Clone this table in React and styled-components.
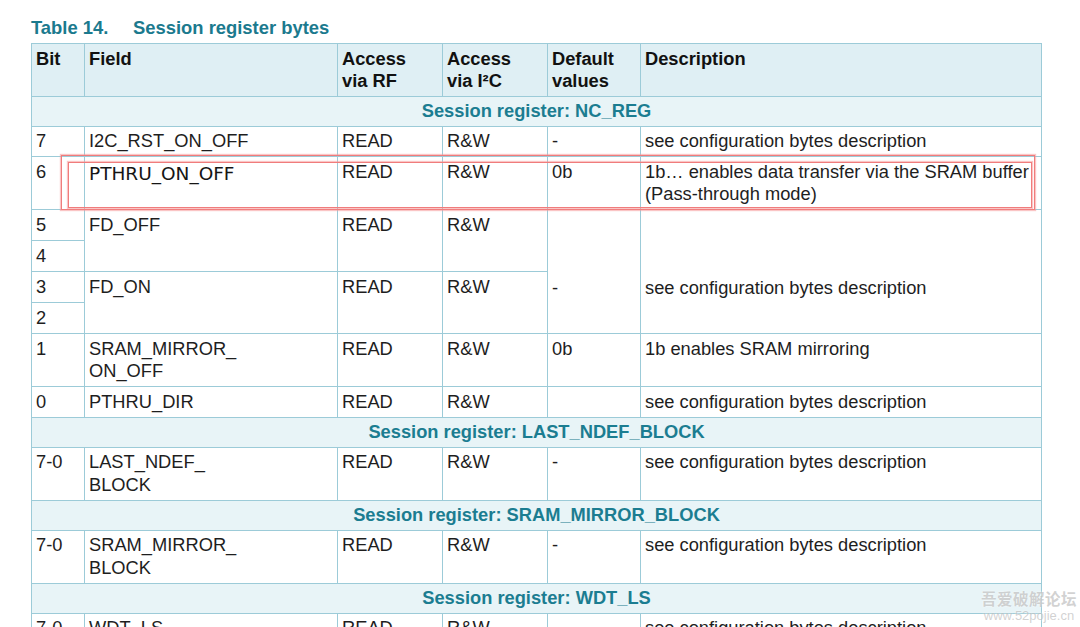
import React from 'react';
import styled, { createGlobalStyle } from 'styled-components';

const GlobalStyle = createGlobalStyle`
  html, body {
    margin: 0;
    padding: 0;
    background: #ffffff;
    overflow: hidden;
  }
  body {
    width: 1080px;
    height: 627px;
    font-family: "Liberation Sans", Arial, sans-serif;
  }
`;

const Page = styled.div`
  position: relative;
  width: 1080px;
  height: 627px;
  overflow: hidden;
  padding: 16px 0 0 31px;
  box-sizing: border-box;
`;

const Caption = styled.div`
  display: flex;
  color: #1b7a8e;
  font-weight: bold;
  font-size: 18.4px;
  line-height: 23px;
  margin-bottom: 4px;

  span:first-child {
    width: 102px;
  }
`;

const Table = styled.table`
  border-collapse: collapse;
  table-layout: fixed;
  width: 1010px;
  font-size: 18.3px;
  line-height: 22.5px;
  color: #1e1e1e;
`;

const Th = styled.th`
  background: #dfeff4;
  border: 1px solid #9ccbd8;
  text-align: left;
  vertical-align: top;
  padding: 3.5px 4px 3px 4px;
  font-weight: bold;
  color: #111;
`;

const Td = styled.td`
  border: 1px solid #9ccbd8;
  border-top-color: ${p => (p.$soft ? '#cfe4ea' : '#9ccbd8')};
  vertical-align: ${p => (p.$middle ? 'middle' : 'top')};
  padding: ${p =>
    p.$middle ? '36px 4px 3.5px 4px' : p.$split ? '3.5px 4px 4px 4px' : '3.5px 4px 3.5px 4px'};
  white-space: nowrap;
`;

const SectionCell = styled.td`
  background: #e8f4f7;
  border: 1px solid #9ccbd8;
  text-align: center;
  color: #1b7d91;
  font-weight: bold;
  padding: 3px 4px 3.5px 4px;
`;

const PastedName = styled.span`
  font-family: "DejaVu Sans", sans-serif;
  font-size: 18.5px;
  color: #151515;
  display: inline-block;
  padding-top: 2px;
`;

const Highlight = styled.div`
  position: absolute;
  pointer-events: none;
  border: 1px solid #f07c7c;
  box-shadow: 0 0 1px 1px rgba(245, 150, 150, 0.55);
`;

const Watermark = styled.div`
  position: absolute;
  right: 3px;
  bottom: 3px;
  color: rgba(165, 165, 165, 0.5);
  text-shadow: 0 0 2px rgba(255, 255, 255, 0.9);
  text-align: center;
  line-height: 17px;

  div:first-child {
    font-family: "Noto Sans CJK SC", sans-serif;
    font-size: 15.5px;
    font-weight: bold;
    letter-spacing: 0.5px;
  }
  div:last-child {
    font-size: 13px;
  }
`;

function Section({ name }) {
  return (
    <tr>
      <SectionCell colSpan={6}>Session register: {name}</SectionCell>
    </tr>
  );
}

function Row({ bit, field, def, desc }) {
  return (
    <tr>
      <Td>{bit}</Td>
      <Td>{field}</Td>
      <Td>READ</Td>
      <Td>R&amp;W</Td>
      <Td>{def}</Td>
      <Td>{desc}</Td>
    </tr>
  );
}

const SEE = 'see configuration bytes description';

export default function App() {
  return (
    <>
      <GlobalStyle />
      <Page>
        <Caption>
          <span>Table 14.</span>
          <span>Session register bytes</span>
        </Caption>
        <Table>
          <colgroup>
            <col style={{ width: 53 }} />
            <col style={{ width: 253 }} />
            <col style={{ width: 105 }} />
            <col style={{ width: 105 }} />
            <col style={{ width: 93 }} />
            <col style={{ width: 401 }} />
          </colgroup>
          <thead>
            <tr>
              <Th>Bit</Th>
              <Th>Field</Th>
              <Th>Access<br />via RF</Th>
              <Th>Access<br />via I²C</Th>
              <Th>Default<br />values</Th>
              <Th>Description</Th>
            </tr>
          </thead>
          <tbody>
            <Section name="NC_REG" />
            <Row bit="7" field="I2C_RST_ON_OFF" def="-" desc={SEE} />
            <Row
              bit="6"
              field={<PastedName>PTHRU_ON_OFF</PastedName>}
              def="0b"
              desc={<>1b… enables data transfer via the SRAM buffer<br />(Pass-through mode)</>}
            />
            <tr>
              <Td $split>5</Td>
              <Td rowSpan={2}>FD_OFF</Td>
              <Td rowSpan={2}>READ</Td>
              <Td rowSpan={2}>R&amp;W</Td>
              <Td rowSpan={4} $middle>-</Td>
              <Td rowSpan={4} $middle>{SEE}</Td>
            </tr>
            <tr>
              <Td $soft $split>4</Td>
            </tr>
            <tr>
              <Td $split>3</Td>
              <Td rowSpan={2}>FD_ON</Td>
              <Td rowSpan={2}>READ</Td>
              <Td rowSpan={2}>R&amp;W</Td>
            </tr>
            <tr>
              <Td $soft $split>2</Td>
            </tr>
            <Row
              bit="1"
              field={<>SRAM_MIRROR_<br />ON_OFF</>}
              def="0b"
              desc="1b enables SRAM mirroring"
            />
            <Row bit="0" field="PTHRU_DIR" def="" desc={SEE} />
            <Section name="LAST_NDEF_BLOCK" />
            <Row bit="7-0" field={<>LAST_NDEF_<br />BLOCK</>} def="-" desc={SEE} />
            <Section name="SRAM_MIRROR_BLOCK" />
            <Row bit="7-0" field={<>SRAM_MIRROR_<br />BLOCK</>} def="-" desc={SEE} />
            <Section name="WDT_LS" />
            <Row bit="7-0" field="WDT_LS" def="-" desc={SEE} />
          </tbody>
        </Table>

        <Highlight style={{ left: 61, top: 155, width: 972, height: 53 }} />
        <Highlight style={{ left: 68, top: 162, width: 962, height: 44 }} />

        <Watermark>
          <div>吾爱破解论坛</div>
          <div>www.52pojie.cn</div>
        </Watermark>
      </Page>
    </>
  );
}
